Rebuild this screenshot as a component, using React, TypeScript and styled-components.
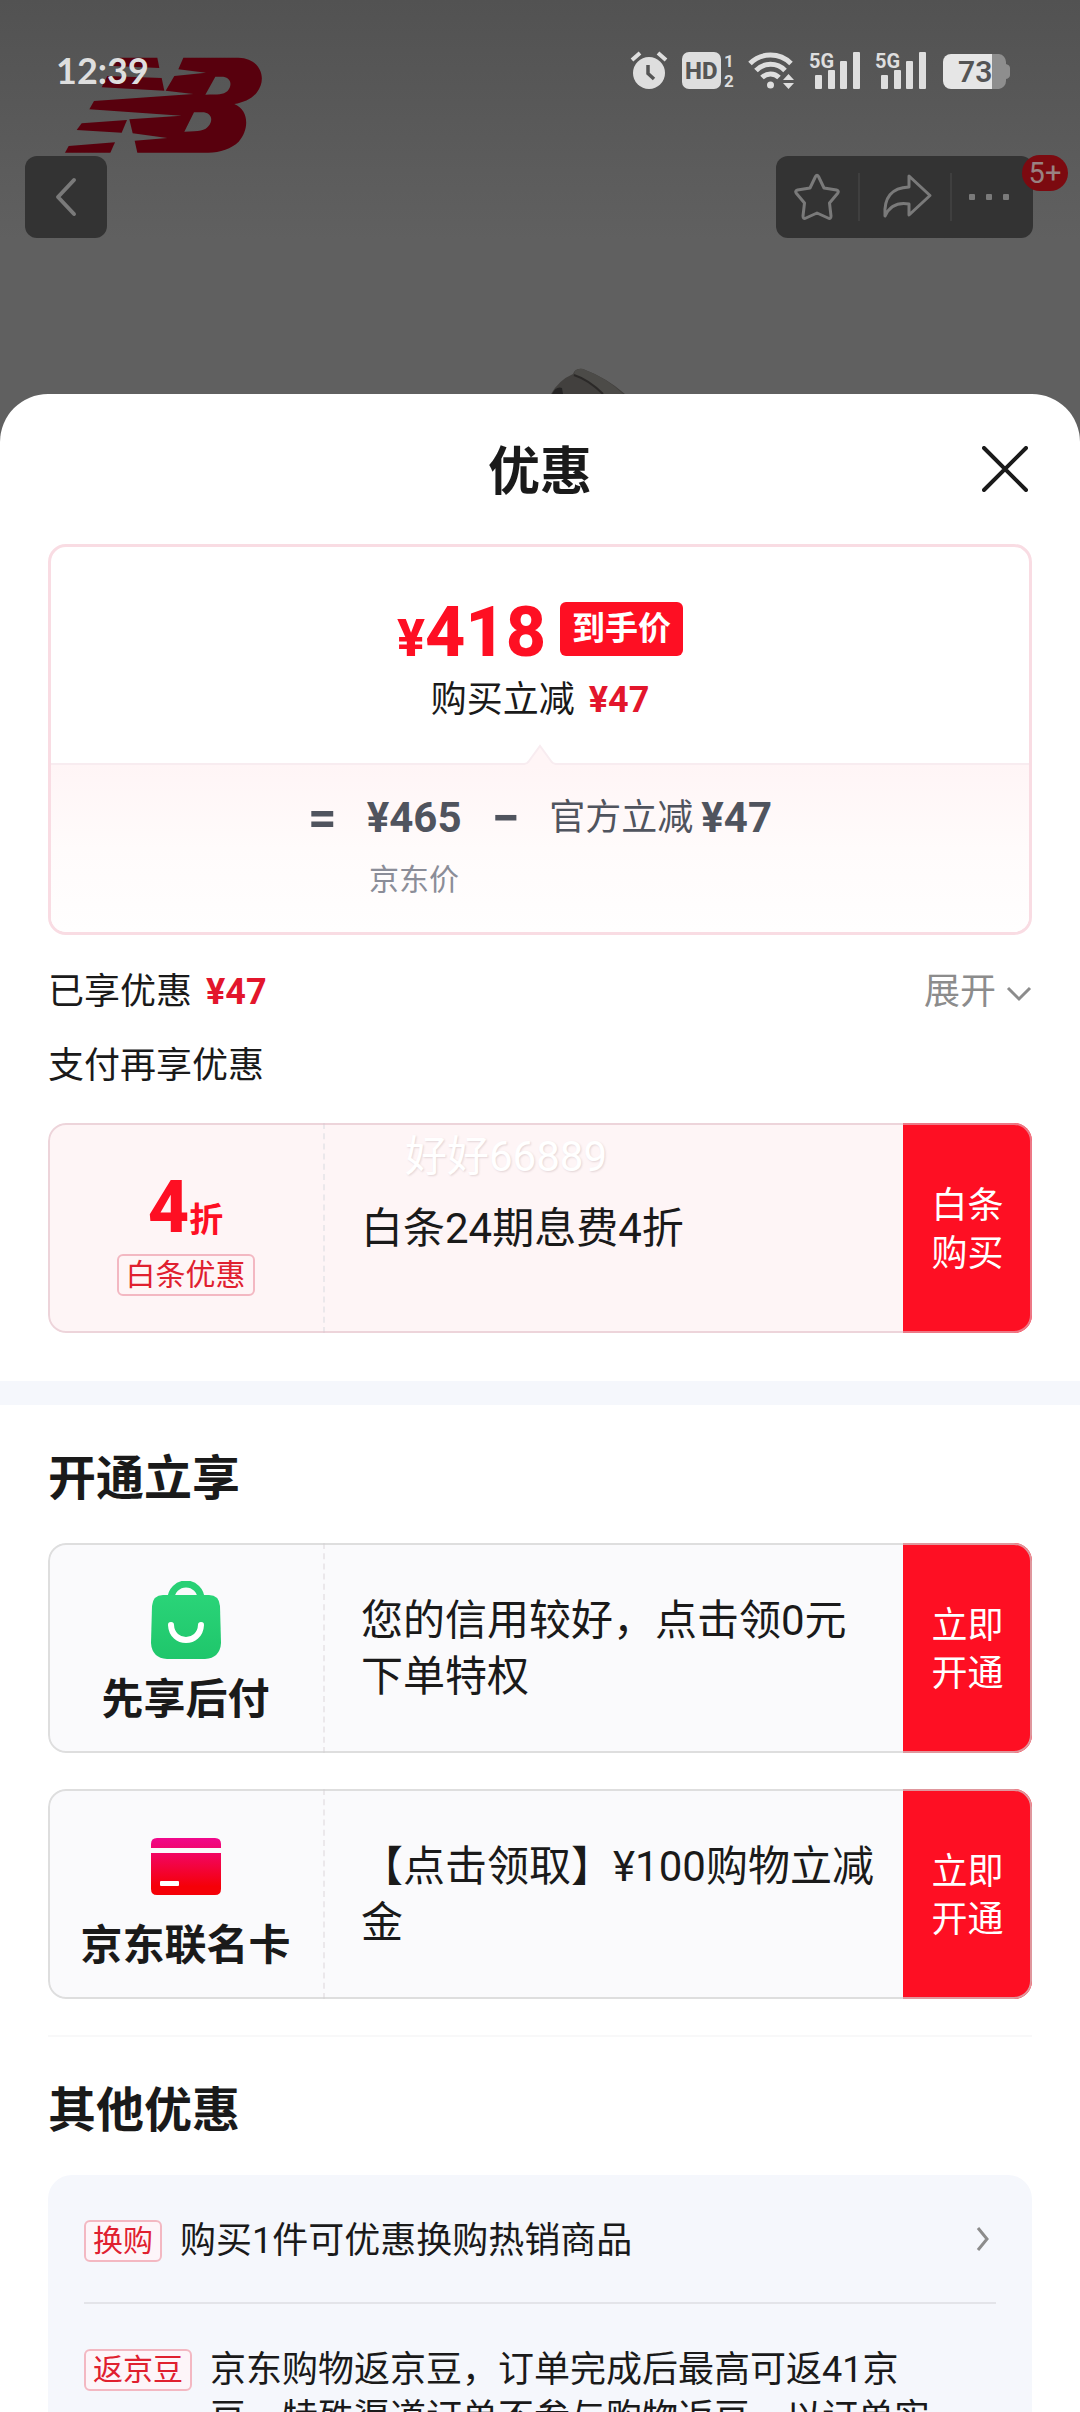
import React from "react";
import styled, { createGlobalStyle } from "styled-components";

const CJK = `Roboto, "Noto Sans CJK SC", sans-serif`;
const RED = "#fe0f23";
const INK = "#1a1a1a";

const GlobalStyle = createGlobalStyle`
  *, *::before, *::after { box-sizing: border-box; }
  body { margin: 0; font-family: ${CJK}; color: ${INK}; }
  h1, h2, p, ul { margin: 0; padding: 0; }
  button { font: inherit; color: inherit; border: 0; background: none; padding: 0; cursor: pointer; }
  svg { display: block; flex: none; }
`;

const Screen = styled.div`
  height: 100vh;
  display: flex;
  flex-direction: column;
  overflow: hidden;
  background: linear-gradient(#525252, #606060 240px);
`;

/* ---------- dimmed product page ---------- */

const StatusBar = styled.div`
  position: relative;
  z-index: 1;
  flex: none;
  display: flex;
  justify-content: space-between;
  align-items: center;
  height: 40px;
  margin-top: 50px;
  padding: 0 70px 0 56px;
  color: #dedede;
`;

const Clock = styled.time`
  font: 700 36px/40px Lato, sans-serif;
`;

const StatusIcons = styled.div`
  display: flex;
  align-items: center;
  gap: 14px;
  svg { overflow: visible; }
`;

const BrandLogo = styled.svg`
  position: absolute;
  left: 50px;
  top: 50px;
`;

const NavBar = styled.nav`
  position: relative;
  flex: none;
  display: flex;
  justify-content: space-between;
  margin-top: 66px;
  padding: 0 47px 0 25px;
`;

const NavGroup = styled.div<{ $end?: number }>`
  position: relative;
  display: flex;
  align-items: center;
  height: 82px;
  padding-right: ${(p) => p.$end ?? 0}px;
  border-radius: 12px;
  background: #333;
`;

const NavButton = styled.button<{ $width: number }>`
  display: flex;
  align-items: center;
  justify-content: center;
  width: ${(p) => p.$width}px;
  height: 48px;
  color: #7a7a7a;
  & + & { border-left: 2px solid #3f3f3f; }
`;

const Badge = styled.span`
  position: absolute;
  right: -35px;
  top: -1px;
  width: 46px;
  height: 36px;
  border-radius: 18px;
  background: #7c0a10;
  color: #998282;
  font-size: 29px;
  line-height: 36px;
  text-align: center;
`;

const Photo = styled.div`
  flex: none;
  display: flex;
  align-items: flex-end;
  justify-content: center;
  height: 156px;
  padding-left: 96px;
`;

/* ---------- bottom sheet ---------- */

const Sheet = styled.main`
  flex: 1;
  min-height: 0;
  overflow: hidden;
  border-radius: 48px 48px 0 0;
  background: #fff;
`;

const SheetHeader = styled.header`
  display: grid;
  grid-template-columns: 1fr auto 1fr;
  align-items: center;
  height: 150px;
  padding: 0 48px;
`;

const Title = styled.h1`
  grid-column: 2;
  padding-top: 8px;
  font-size: 52px;
  line-height: 64px;
  font-weight: 700;
`;

const CloseButton = styled.button`
  justify-self: end;
  padding: 4px;
`;

const Section = styled.section`
  padding: 0 48px;
`;

const PriceCard = styled.div`
  border: 3px solid #f9dce3;
  border-radius: 18px;
`;

const PriceTop = styled.div`
  display: flex;
  flex-direction: column;
  align-items: center;
  padding: 55px 0 39px;
`;

const PriceLine = styled.div`
  display: flex;
  align-items: center;
  gap: 14px;
  height: 54px;
  margin-bottom: 20px;
`;

const BigPrice = styled.strong`
  padding-top: 6px;
  color: ${RED};
  font-size: 70px;
  line-height: 54px;
  font-weight: 800;
  small { font-size: 52px; line-height: 1px; }
`;

const PriceTag = styled.span`
  padding: 0 12px;
  border-radius: 6px;
  background: ${RED};
  color: #fff;
  font-size: 33px;
  line-height: 54px;
  font-weight: 700;
`;

const Amount = styled.b`
  margin-left: 14px;
  color: #e3162c;
  font-weight: 700;
`;

const BodyText = styled.p`
  font-size: 36px;
  line-height: 48px;
`;

const Formula = styled.div`
  position: relative;
  display: flex;
  justify-content: center;
  gap: 30px;
  padding: 29px 0 32px;
  border-top: 2px solid #f8ecf0;
  border-radius: 0 0 15px 15px;
  background: linear-gradient(#fff5f6, #fffbfb 50%, #fffefe);
  color: #50545e;
  line-height: 48px;
`;

const Notch = styled.svg`
  position: absolute;
  left: 50%;
  top: -21px;
  margin-left: -16px;
`;

const Figure = styled.b`
  font-size: 42px;
  font-weight: 700;
`;

const Operator = styled.b`
  font-size: 50px;
  font-weight: 700;
`;

const Term = styled.div`
  display: flex;
  flex-direction: column;
  align-items: center;
  gap: 18px;
`;

const TermNote = styled.span`
  color: #8b8d98;
  font-size: 30px;
  line-height: 40px;
`;

const Deduction = styled.span`
  display: flex;
  align-items: center;
  gap: 8px;
  height: 48px;
  font-size: 36px;
`;

const Saved = styled.div`
  display: flex;
  justify-content: space-between;
  align-items: center;
  margin: 33px 0 26px;
`;

const ExpandButton = styled.button`
  display: flex;
  align-items: center;
  gap: 10px;
  color: #8c8c8c;
  font-size: 36px;
  line-height: 48px;
  svg { margin-top: 4px; }
`;

const Coupon = styled.article<{ $pink?: boolean }>`
  position: relative;
  display: flex;
  height: 210px;
  overflow: hidden;
  border-radius: 18px;
  background: ${(p) => (p.$pink ? "#fef5f6" : "#fafafc")};
  &::after {
    content: "";
    position: absolute;
    inset: 0;
    border: 2px solid ${(p) => (p.$pink ? "rgba(225, 190, 200, 0.6)" : "rgba(210, 210, 210, 0.7)")};
    border-radius: 18px;
    pointer-events: none;
  }
`;

const CouponSide = styled.div<{ $top: number }>`
  flex: none;
  display: flex;
  flex-direction: column;
  align-items: center;
  width: 277px;
  padding-top: ${(p) => p.$top}px;
  border-right: 2px dashed #ebe8eb;
`;

const Discount = styled.strong`
  height: 56px;
  margin-bottom: 18px;
  color: ${RED};
  font-size: 34px;
  line-height: 56px;
  font-weight: 700;
  big { font-size: 72px; font-weight: 800; }
`;

const Tag = styled.span`
  flex: none;
  padding: 0 7px;
  border: 2px solid #f3b8c2;
  border-radius: 6px;
  color: #e0202f;
  font-size: 30px;
  line-height: 38px;
`;

const IconBox = styled.div`
  display: flex;
  align-items: center;
  height: 78px;
  margin-bottom: 17px;
`;

const CouponName = styled.strong`
  font-size: 42px;
  line-height: 48px;
  font-weight: 700;
`;

const CouponText = styled.p`
  flex: 1;
  min-width: 0;
  align-self: center;
  padding: 1px 22px 0 36px;
  font-size: 42px;
  line-height: 56px;
`;

const CouponButton = styled.button`
  && { background: ${RED}; color: #fff; padding: 4px 28px 0; }
  flex: none;
  width: 129px;
  font-size: 36px;
  line-height: 48px;
`;

const Watermark = styled.span`
  position: absolute;
  left: 357px;
  top: 10px;
  color: #fff;
  font-size: 42px;
  line-height: 48px;
  text-shadow: 1px 1px 2px rgba(120, 90, 95, 0.2);
`;

const Band = styled.div`
  height: 24px;
  margin: 48px 0 42px;
  background: #f5f7fc;
`;

const Heading = styled.h2`
  margin-bottom: 32px;
  font-size: 48px;
  line-height: 64px;
  font-weight: 700;
`;

const Stack = styled.div<{ $gap: number }>`
  display: grid;
  gap: ${(p) => p.$gap}px;
`;

const Divider = styled.hr`
  height: 2px;
  margin: 36px 0 42px;
  border: 0;
  background: #f8f8f9;
`;

const OfferList = styled.ul`
  padding: 0 36px;
  border-radius: 24px;
  background: #f5f7fc;
  list-style: none;
`;

const Offer = styled.li`
  display: flex;
  align-items: flex-start;
  gap: 18px;
  padding: 42px 0 37px;
  & + & { border-top: 2px solid #e3e4e9; }
  ${Tag} { margin-top: 3px; background: #fdf5f9; }
`;

const OfferText = styled.p`
  flex: 1;
  margin-right: 60px;
  font-size: 36px;
  line-height: 48px;
`;

const OfferLink = styled.button`
  display: flex;
  align-items: center;
  justify-content: flex-end;
  width: 24px;
  height: 44px;
  && { padding-right: 6px; }
`;

/* ---------- drawings ---------- */

const Signal = () => (
  <svg width="52" height="40" viewBox="0 0 52 40" fill="#dedede">
    <text x="0" y="18" fontFamily="Roboto" fontWeight="700" fontSize="20">5G</text>
    <rect x="6" y="25" width="7" height="14" rx="1" />
    <rect x="19" y="20" width="7" height="19" rx="1" />
    <rect x="31" y="11" width="7" height="28" rx="1" />
    <rect x="44" y="2" width="7" height="37" rx="1" />
  </svg>
);

const StatusSymbols = () => (
  <StatusIcons>
    <svg width="38" height="40" viewBox="0 0 38 40" fill="#dedede">
      <circle cx="19" cy="23" r="16" />
      <path d="M2 10 L10 3 M36 10 L28 3" stroke="#dedede" strokeWidth="4" />
      <path d="M18 15 V23.500 L24 29" stroke="#555" strokeWidth="3.500" fill="none" />
    </svg>
    <svg width="52" height="40" viewBox="0 0 52 40" fill="#dedede">
      <rect x="0" y="2" width="39" height="37" rx="7" />
      <text x="3" y="29" fontFamily="Roboto" fontWeight="800" fontSize="24" fill="#555">HD</text>
      <text x="42" y="17" fontFamily="Roboto" fontWeight="700" fontSize="17">1</text>
      <text x="42" y="37" fontFamily="Roboto" fontWeight="700" fontSize="17">2</text>
    </svg>
    <svg width="47" height="40" viewBox="0 0 47 40" fill="none" stroke="#dedede" strokeWidth="5">
      <path d="M2 13.500 A29 29 0 0 1 43 13.500" />
      <path d="M8 20.500 A20 20 0 0 1 37 20.500" />
      <path d="M14 27.500 A12 12 0 0 1 31 27.500" />
      <circle cx="22.500" cy="35" r="3.500" fill="#dedede" stroke="none" />
      <path d="M35 30 L40.500 24 L46 30 Z M35 33 L40.500 39 L46 33 Z" fill="#dedede" stroke="none" />
    </svg>
    <Signal />
    <Signal />
    <svg width="69" height="40" viewBox="-2 0 69 40">
      <path d="M8 4 H49 V39 H8 A8 8 0 0 1 0 31 V12 A8 8 0 0 1 8 4" fill="#e6e6e6" />
      <path d="M49 4 H56 A8 8 0 0 1 63 12 V14 Q67 15 67 18 V25 Q67 28 63 29 V31 A8 8 0 0 1 56 39 H49 Z" fill="#8e8e8e" />
      <text x="15" y="32" fontFamily="Roboto" fontWeight="600" fontSize="30" fill="#555">73</text>
    </svg>
  </StatusIcons>
);

const Logo = () => (
  <BrandLogo width="240" height="120" viewBox="0 0 720 360" fill="#58000d">
    <path d="M210 23 H322 L328 54 L190 48 Z" />
    <path d="M172 78 L335 84 L343 122 L155 112 Z" />
    <path d="M95 220 L231 210 L215 248 L80 240 Z" />
    <path d="M56 288 L195 277 L181 308 H45 Z" />
    <path
      fillRule="evenodd"
      d="M400 23 H565 C635 25 652 90 620 128 C604 147 580 157 553 162 C598 180 598 240 566 275 C545 295 510 308 475 308 H262 L254 272 L352 264 L248 250 L238 208 L395 197 L118 178 L132 153 L430 132 L347 122 L373 78 L468 68 L385 58 Z
         M496 80 H520 C545 84 547 108 532 124 C520 134 505 134 466 134 Z
         M432 187 H462 C487 192 489 212 475 229 C464 242 450 245 403 245 Z"
    />
  </BrandLogo>
);

const BagIcon = () => (
  <svg width="70" height="78" viewBox="0 0 70 78">
    <defs>
      <linearGradient id="bag" x1="0" y1="0" x2="0" y2="1">
        <stop offset="0" stopColor="#2ad478" />
        <stop offset="1" stopColor="#1fc66b" />
      </linearGradient>
    </defs>
    <path d="M20 18 A15 15 0 0 1 50 18" fill="none" stroke="#28d075" strokeWidth="7" />
    <path d="M12 14 H58 Q68 14 69 25 L70 62 Q69 77 54 78 H16 Q1 77 0 62 L1 25 Q2 14 12 14 Z" fill="url(#bag)" />
    <path d="M20 44 C21 64 49 64 50 44" fill="none" stroke="#fff" strokeWidth="6" strokeLinecap="round" />
  </svg>
);

const CardIcon = () => (
  <svg width="70" height="57" viewBox="0 0 70 57">
    <defs>
      <linearGradient id="card" gradientUnits="userSpaceOnUse" x1="0" y1="0" x2="0" y2="57">
        <stop offset="0" stopColor="#f0088c" />
        <stop offset="0.850" stopColor="#f50008" />
      </linearGradient>
    </defs>
    <path d="M6 0 H64 Q70 0 70 6 V10 H0 V6 Q0 0 6 0 Z M0 15 H70 V51 Q70 57 64 57 H6 Q0 57 0 51 Z" fill="url(#card)" />
    <rect x="9" y="43" width="19" height="5" rx="1" fill="#fff" />
  </svg>
);

const services = [
  { name: "先享后付", icon: <BagIcon />, text: "您的信用较好，点击领0元下单特权" },
  { name: "京东联名卡", icon: <CardIcon />, text: "【点击领取】¥100购物立减金" },
];

export default function App() {
  return (
    <Screen>
      <GlobalStyle />
      <Logo />
      <StatusBar>
        <Clock>12:39</Clock>
        <StatusSymbols />
      </StatusBar>
      <NavBar>
        <NavGroup>
          <NavButton $width={82} aria-label="返回">
            <svg width="24" height="40" viewBox="0 0 24 40" fill="none" stroke="currentColor" strokeWidth="4" strokeLinecap="round" strokeLinejoin="round">
              <path d="M20 3 L4 20 L20 37" />
            </svg>
          </NavButton>
        </NavGroup>
        <NavGroup $end={7}>
          <NavButton $width={82} aria-label="收藏">
            <svg width="46" height="48" viewBox="0 0 46 48" fill="none" stroke="currentColor" strokeWidth="3" strokeLinejoin="round">
              <path d="M21.500 3.500 Q23 1 24.500 3.500 L30 15 L42.500 17 Q45.500 18 43.500 20.500 L35.500 30 L37 43 Q37 46.500 34 45 L23 40 L12 45 Q9 46.500 9 43 L10.500 30 L2.500 20.500 Q0.500 18 3.500 17 L16 15 Z" />
            </svg>
          </NavButton>
          <NavButton $width={92} aria-label="分享">
            <svg width="50" height="44" viewBox="-2 0 50 44" overflow="visible" fill="none" stroke="currentColor" strokeWidth="3" strokeLinejoin="round">
              <path d="M27 1 L48 20.500 L27 40 V29 Q10 26 3 41 Q1 13 27 12 Z" />
            </svg>
          </NavButton>
          <NavButton $width={76} aria-label="更多">
            <svg width="40" height="6" viewBox="0 0 40 6" fill="currentColor">
              <rect width="6" height="6" rx="1" />
              <rect x="17" width="6" height="6" rx="1" />
              <rect x="34" width="6" height="6" rx="1" />
            </svg>
          </NavButton>
          <Badge>5+</Badge>
        </NavGroup>
      </NavBar>
      <Photo>
        <svg width="74" height="26" viewBox="0 0 74 26">
          <path d="M0 26 Q8 12 22 6 Q24 0 32 1 Q56 10 74 26 Z" fill="#42403e" />
          <path d="M24 3 Q28 0 32 1 Q56 10 72 26 H52 Q38 12 23 7 Z" fill="#4c4b48" />
          <path d="M23 7 Q38 12 52 26" fill="none" stroke="#2b2928" strokeWidth="2" />
          <path d="M1 26 Q5 18 11 20 L12 26 Z" fill="#252424" />
        </svg>
      </Photo>

      <Sheet>
        <SheetHeader>
          <Title>优惠</Title>
          <CloseButton aria-label="关闭">
            <svg width="46" height="46" viewBox="0 0 46 46" stroke={INK} strokeWidth="4" strokeLinecap="round">
              <path d="M2 2 L44 44 M44 2 L2 44" />
            </svg>
          </CloseButton>
        </SheetHeader>

        <Section>
          <PriceCard>
            <PriceTop>
              <PriceLine>
                <BigPrice><small>¥</small>418</BigPrice>
                <PriceTag>到手价</PriceTag>
              </PriceLine>
              <BodyText>购买立减<Amount>¥47</Amount></BodyText>
            </PriceTop>
            <Formula>
              <Notch width="32" height="23" viewBox="0 0 32 23">
                <path d="M0 21 Q3 20 5 17 L16 2 L27 17 Q29 20 32 21 V23 H0 Z" fill="#fff5f6" />
                <path d="M0 20 Q3 20 5 17 L16 2 L27 17 Q29 20 32 20" fill="none" stroke="#f8ecf0" strokeWidth="2" />
              </Notch>
              <Operator>=</Operator>
              <Term>
                <Figure>¥465</Figure>
                <TermNote>京东价</TermNote>
              </Term>
              <Operator>−</Operator>
              <Deduction>官方立减<Figure>¥47</Figure></Deduction>
            </Formula>
          </PriceCard>

          <Saved>
            <BodyText>已享优惠<Amount>¥47</Amount></BodyText>
            <ExpandButton>
              展开
              <svg width="26" height="16" viewBox="0 0 26 16" fill="none" stroke="currentColor" strokeWidth="3">
                <path d="M2 2 L13 13 L24 2" />
              </svg>
            </ExpandButton>
          </Saved>
          <Stack $gap={33}>
            <BodyText>支付再享优惠</BodyText>
            <Coupon $pink>
              <CouponSide $top={57}>
                <Discount><big>4</big>折</Discount>
                <Tag>白条优惠</Tag>
              </CouponSide>
              <CouponText>白条24期息费4折</CouponText>
              <CouponButton>白条购买</CouponButton>
              <Watermark>好好66889</Watermark>
            </Coupon>
          </Stack>
        </Section>

        <Band />

        <Section>
          <Heading>开通立享</Heading>
          <Stack $gap={36}>
            {services.map((s) => (
              <Coupon key={s.name}>
                <CouponSide $top={38}>
                  <IconBox>{s.icon}</IconBox>
                  <CouponName>{s.name}</CouponName>
                </CouponSide>
                <CouponText>{s.text}</CouponText>
                <CouponButton>立即开通</CouponButton>
              </Coupon>
            ))}
          </Stack>
          <Divider />
          <Heading>其他优惠</Heading>
          <OfferList>
            <Offer>
              <Tag>换购</Tag>
              <OfferText>购买1件可优惠换购热销商品</OfferText>
              <OfferLink aria-label="查看换购商品">
                <svg width="14" height="26" viewBox="0 0 14 26" fill="none" stroke="#8c8c8c" strokeWidth="3">
                  <path d="M2 2 L11 13 L2 24" />
                </svg>
              </OfferLink>
            </Offer>
            <Offer>
              <Tag>返京豆</Tag>
              <OfferText>京东购物返京豆，订单完成后最高可返41京豆，特殊渠道订单不参与购物返豆，以订单实</OfferText>
            </Offer>
          </OfferList>
        </Section>
      </Sheet>
    </Screen>
  );
}
